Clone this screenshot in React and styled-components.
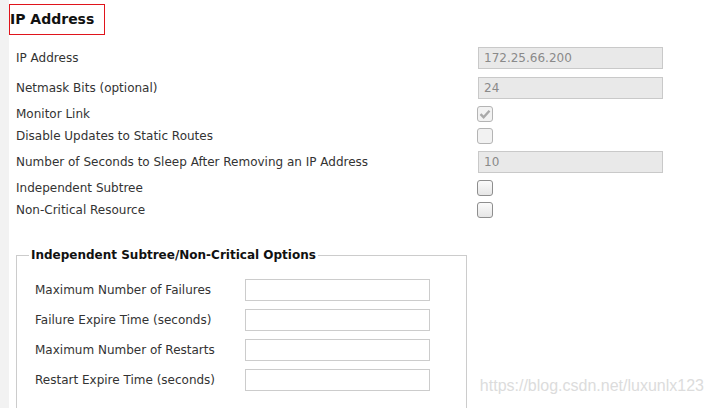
import React from 'react';
import styled, { createGlobalStyle } from 'styled-components';

const GlobalStyle = createGlobalStyle`
  html, body {
    margin: 0;
    padding: 0;
    background: #ffffff;
  }
  body {
    font-family: "DejaVu Sans", "Noto Sans", sans-serif;
    color: #333333;
  }
`;

const mainRows = [
  { label: 'IP Address', kind: 'text', value: '172.25.66.200' },
  { label: 'Netmask Bits (optional)', kind: 'text', value: '24' },
  { label: 'Monitor Link', kind: 'check', checked: true, disabled: true },
  { label: 'Disable Updates to Static Routes', kind: 'check', disabled: true },
  { label: 'Number of Seconds to Sleep After Removing an IP Address', kind: 'text', value: '10' },
  { label: 'Independent Subtree', kind: 'check' },
  { label: 'Non-Critical Resource', kind: 'check' },
];

const optionRows = [
  'Maximum Number of Failures',
  'Failure Expire Time (seconds)',
  'Maximum Number of Restarts',
  'Restart Expire Time (seconds)',
];

const Checkbox = ({ checked, disabled }) => (
  <S.CheckBox $disabled={disabled}>
    {checked && (
      <svg width="12" height="10" viewBox="0 0 12 10">
        <path d="M1.5 5.2 L4.6 8.2 L10.5 1.8" fill="none" stroke="#a9a9a9" strokeWidth="2.4" />
      </svg>
    )}
  </S.CheckBox>
);

const App = () => {
  return (
    <>
      <GlobalStyle />
      <S.Page>
        <S.Strip />
        <S.Main>
          <S.Title>IP Address</S.Title>
          <S.Form>
            {mainRows.map((row) => (
              <S.Row key={row.label} $kind={row.kind}>
                <S.Label>{row.label}</S.Label>
                {row.kind === 'text' ? (
                  <S.TextInput $disabled readOnly value={row.value} />
                ) : (
                  <Checkbox checked={row.checked} disabled={row.disabled} />
                )}
              </S.Row>
            ))}
          </S.Form>
          <S.Fieldset>
            <S.Legend>Independent Subtree/Non-Critical Options</S.Legend>
            {optionRows.map((label) => (
              <S.OptionRow key={label}>
                <S.Label>{label}</S.Label>
                <S.TextInput readOnly value="" />
              </S.OptionRow>
            ))}
          </S.Fieldset>
        </S.Main>
        <S.Watermark>https://blog.csdn.net/luxunlx123</S.Watermark>
      </S.Page>
    </>
  );
};

export default App;

// Styled Components
const S = {};

S.Page = styled.div`
  position: relative;
  display: flex;
  width: 714px;
  height: 408px;
  overflow: hidden;
`;

S.Strip = styled.div`
  width: 9px;
  flex-shrink: 0;
  background: #f2f2f2;
`;

S.Main = styled.div`
  flex: 1;
  padding-top: 4px;
`;

S.Title = styled.div`
  box-sizing: border-box;
  width: 96px;
  height: 31px;
  border: 1px solid #e0141c;
  padding-left: 0;
  font-size: 14px;
  font-weight: bold;
  line-height: 29px;
  color: #111111;
  white-space: nowrap;
`;

S.Form = styled.div`
  display: flex;
  flex-direction: column;
  margin-top: 8px;
  padding-left: 7px;
`;

S.Row = styled.div`
  display: grid;
  grid-template-columns: 462px 185px;
  align-items: center;
  height: ${(p) => (p.$kind === 'text' ? '30px' : '22px')};
`;

S.Label = styled.span`
  font-size: 12px;
  color: #333333;
  white-space: nowrap;
`;

S.TextInput = styled.input`
  box-sizing: border-box;
  width: 185px;
  height: 22px;
  margin: 0;
  padding: 0 5px;
  border: 1px solid ${(p) => (p.$disabled ? '#c9c9c9' : '#cccccc')};
  border-radius: 0;
  background: ${(p) => (p.$disabled ? '#e9e9e9' : '#ffffff')};
  font-family: "DejaVu Sans", sans-serif;
  font-size: 12px;
  color: #8a8a8a;
  outline: none;
`;

S.CheckBox = styled.span`
  box-sizing: border-box;
  display: flex;
  align-items: center;
  justify-content: center;
  width: 16px;
  height: 16px;
  margin-left: -1px;
  border: 1px solid ${(p) => (p.$disabled ? '#b4b4b4' : '#8e8e8e')};
  border-radius: 3px;
  background: ${(p) =>
    p.$disabled ? '#f2f2f2' : 'linear-gradient(#fbfbfb, #e6e6e6)'};
`;

S.Fieldset = styled.fieldset`
  box-sizing: border-box;
  width: 451px;
  margin: 27px 0 0 7px;
  padding: 13px 0 20px 18px;
  border: 1px solid #cccccc;
`;

S.Legend = styled.legend`
  margin-left: -6px;
  padding: 0 2px;
  font-size: 12px;
  font-weight: bold;
  color: #111111;
`;

S.OptionRow = styled.div`
  display: grid;
  grid-template-columns: 210px 185px;
  align-items: center;
  height: 30px;
`;

S.Watermark = styled.div`
  position: absolute;
  right: 10px;
  bottom: 13px;
  font-family: "Liberation Sans", Arial, sans-serif;
  font-size: 16px;
  color: #dcdcdc;
  white-space: nowrap;
`;
